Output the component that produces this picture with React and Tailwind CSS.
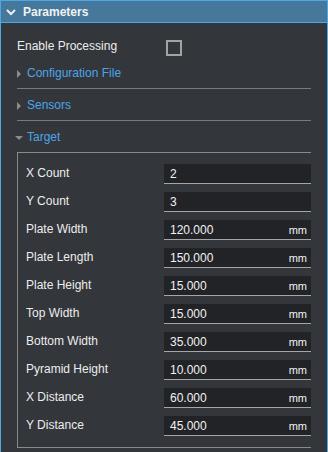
import React from 'react';

const fields = [
  { label: 'X Count', value: '2' },
  { label: 'Y Count', value: '3' },
  { label: 'Plate Width', value: '120.000', unit: 'mm' },
  { label: 'Plate Length', value: '150.000', unit: 'mm' },
  { label: 'Plate Height', value: '15.000', unit: 'mm' },
  { label: 'Top Width', value: '15.000', unit: 'mm' },
  { label: 'Bottom Width', value: '35.000', unit: 'mm' },
  { label: 'Pyramid Height', value: '10.000', unit: 'mm' },
  { label: 'X Distance', value: '60.000', unit: 'mm' },
  { label: 'Y Distance', value: '45.000', unit: 'mm' },
];

function Caret( { open } )
{
  return (
    <span className="-ml-[2px] flex h-[14px] w-[8px] items-center justify-center">
      { open
        ? <span className="mt-[1px] h-0 w-0 border-x-[4px] border-t-[4px] border-x-transparent border-t-[#8c8c8c]" />
        : <span className="mt-[2px] h-0 w-0 border-y-[4px] border-l-[4px] border-y-transparent border-l-[#8c8c8c]" /> }
    </span>
  );
}

function Section( { title, open, children } )
{
  return (
    <div className={ open ? 'pt-[9px]' : 'border-b border-[#7a7a7a] pt-[9px] pb-[8px]' }>
      <div className="flex h-[14px] items-center leading-[14px]">
        <Caret open={ open } />
        <span className="ml-1 text-[#4ba6e8]">{ title }</span>
      </div>
      { children }
    </div>
  );
}

function Field( { label, value, unit } )
{
  return (
    <div className="flex h-[20px]">
      <div className="w-[138px] pt-[2px] leading-[14px] text-[#ededed]">{ label }</div>
      <div className="flex flex-1 items-center justify-between border-b border-[#a6a6a6] bg-[#212327] pl-[6px] pr-[4px]">
        <span className="leading-[14px] text-[#f2f2f2]">{ value }</span>
        { unit && <span className="text-[11px] leading-[14px] text-[#f2f2f2]">{ unit }</span> }
      </div>
    </div>
  );
}

export default function App()
{
  return (
    <div
      className="h-[452px] w-[328px] overflow-hidden border-x border-t border-[#4fa8e6] bg-[#33363b] text-[12px]"
      style={ { fontFamily: '"Liberation Sans", Arial, sans-serif' } }
    >
      <div className="flex h-[22px] items-center border-b border-[#4fa8e6] bg-[#45789b] pl-[5px]">
        <svg width="10" height="7" viewBox="0 0 10 7" className="mt-[1px]">
          <polyline points="1,1 5,5 9,1" fill="none" stroke="#eeeeee" strokeWidth="2" />
        </svg>
        <span className="ml-[7px] font-bold text-[#f2f2f2]">Parameters</span>
      </div>

      <div className="px-4 pt-4">
        <div className="mb-[1px] flex h-[17px] items-start">
          <span className="w-[149px] leading-[14px] text-[#ededed]">Enable Processing</span>
          <span className="mt-[1px] h-4 w-4 border-2 border-[#a3a3a3]" />
        </div>

        <Section title="Configuration File" />
        <Section title="Sensors" />
        <Section title="Target" open>
          <div className="mt-[8px] flex flex-col gap-[8px] border-y border-l border-[#8a8a8a] pt-[11px] pb-[11px] pl-2">
            { fields.map( ( f ) => (
              <Field key={ f.label } { ...f } />
            ) ) }
          </div>
        </Section>
      </div>
    </div>
  );
}
